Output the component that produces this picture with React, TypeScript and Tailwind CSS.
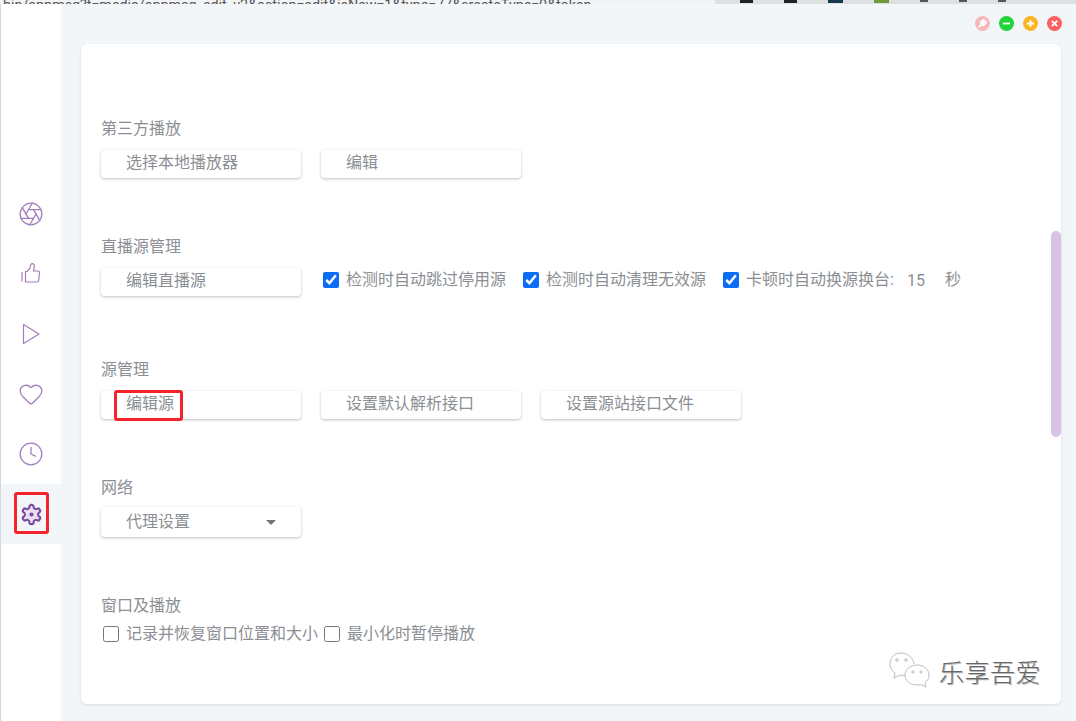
import { Aperture, Clock, Heart } from "lucide-react";

const font = "font-['Roboto','Noto_Sans_CJK_SC',sans-serif]";

function SideItem({ children, active }: { children: React.ReactNode; active?: boolean }) {
  return (
    <div className={`relative h-[60px] flex items-center justify-center ${active ? "bg-[#f2f6f9]" : ""}`}>
      {children}
    </div>
  );
}

function Section({ title, gap, top, children }: { title: string; gap: string; top: string; children: React.ReactNode }) {
  return (
    <section className={top}>
      <h3 className={`h-6 leading-[26px] text-base text-[#8b8f94] font-normal ${gap}`}>{title}</h3>
      {children}
    </section>
  );
}

function Btn({ label, marked }: { label: string; marked?: boolean }) {
  return (
    <button className="relative w-[200px] h-7 pl-[25px] pb-0.5 text-left text-base text-[#8b8f94] bg-white rounded-[4px] shadow-[0_1px_3px_rgba(0,0,0,0.25)]">
      {label}
      {marked && <span className="absolute left-[13px] -top-px w-[69px] h-[31px] rounded-[3px] border-[3px] border-[#f5232b]" />}
    </button>
  );
}

function Check({ label, checked }: { label: string; checked?: boolean }) {
  return (
    <label className="flex items-center gap-[7px] text-base leading-6 text-[#8b8f94]">
      <input type="checkbox" defaultChecked={checked} className="w-4 h-4 m-0 accent-[#0b6cf5]" />
      {label}
    </label>
  );
}

export default function App() {
  return (
    <div className={`${font} w-full h-[721px] overflow-hidden bg-[#f2f6f9] flex flex-col`}>
      {/* the browser window above is cut off, only its lowest pixels show */}
      <div className="h-1 flex items-end overflow-hidden bg-[#f3f3f3] text-[#55585c] text-[14.3px] leading-4 whitespace-nowrap">
        <span className="w-[715px] pl-[3px] -mb-[9px] shrink-0">bin/appmsg?t=media/appmsg_edit_v2&amp;action=edit&amp;isNew=1&amp;type=77&amp;createType=0&amp;token</span>
        <div className="flex-1 h-full bg-[#dedfe0] flex gap-[31px] pl-[25px]">
          <span className="w-[13px] h-[3px] bg-[#222]" />
          <span className="w-[13px] h-[3px] bg-[#222]" />
          <span className="w-[15px] h-[3px] bg-[#123a4a]" />
          <span className="w-[15px] h-[3px] bg-[#6f9a3a]" />
          <span className="w-2 h-0.5 bg-[#555]" />
          <span className="w-2 h-0.5 bg-[#555]" />
          <span className="w-2 h-0.5 bg-[#555]" />
        </div>
      </div>

      <div className="flex-1 flex min-h-0">
        <aside className="w-[61px] bg-white border-l border-l-[#d5d8da] pt-[180px] shrink-0 text-[#a27ebb]">
          <SideItem><Aperture size={26} strokeWidth={1.2} /></SideItem>
          <SideItem>
            <svg width="24" height="24" viewBox="0 0 24 24" fill="none" stroke="currentColor" strokeWidth="1.2" strokeLinejoin="round" className="-mt-0.5">
              <path d="M3 11v9.500M6.500 10.500h1.500c2-1.500 3.500-4 4-7 .2-1.300 3-1.200 3.300 1 .2 1.700-.4 3.800-.9 5.500h4.600c1 0 1.600.8 1.500 1.800l-.8 7.500c-.1.9-.7 1.700-1.700 1.700H6.500z" />
            </svg>
          </SideItem>
          <SideItem>
            <svg width="24" height="24" viewBox="0 0 24 24" fill="none" stroke="currentColor" strokeWidth="1.2" strokeLinejoin="round">
              <path d="M4.500 2.500v19L20 12z" />
            </svg>
          </SideItem>
          <SideItem><Heart size={26} strokeWidth={1.2} /></SideItem>
          <SideItem><Clock size={26} strokeWidth={1.2} /></SideItem>
          <SideItem active>
            <svg width="23" height="23" viewBox="0 0 24 24" fill="#e9e0f2" stroke="#7c4a9e" strokeWidth="2.2">
              <path d="M12.220 2h-.44a2 2 0 0 0-2 2v.18a2 2 0 0 1-1 1.730l-.43.25a2 2 0 0 1-2 0l-.15-.08a2 2 0 0 0-2.730.73l-.22.38a2 2 0 0 0 .73 2.730l.15.1a2 2 0 0 1 1 1.720v.51a2 2 0 0 1-1 1.740l-.15.09a2 2 0 0 0-.73 2.730l.22.38a2 2 0 0 0 2.730.73l.15-.08a2 2 0 0 1 2 0l.43.25a2 2 0 0 1 1 1.730V20a2 2 0 0 0 2 2h.44a2 2 0 0 0 2-2v-.18a2 2 0 0 1 1-1.730l.43-.25a2 2 0 0 1 2 0l.15.08a2 2 0 0 0 2.730-.73l.22-.39a2 2 0 0 0-.73-2.730l-.15-.08a2 2 0 0 1-1-1.740v-.5a2 2 0 0 1 1-1.740l.15-.09a2 2 0 0 0 .73-2.730l-.22-.38a2 2 0 0 0-2.730-.73l-.15.08a2 2 0 0 1-2 0l-.43-.25a2 2 0 0 1-1-1.730V4a2 2 0 0 0-2-2z" />
              <circle cx="12" cy="12" r="2.200" fill="#7c4a9e" stroke="none" />
            </svg>
            <span className="absolute left-[13px] top-[8px] w-[35px] h-[42px] rounded-[3px] border-[3px] border-[#f5232b]" />
          </SideItem>
        </aside>

        <main className="flex-1 min-w-0 flex flex-col pl-5 pr-[15px] pb-[17px]">
          <div className="h-10 flex items-start justify-end gap-[9px] pt-3 -mr-px">
            <span className="w-[15px] h-[15px] rounded-full bg-[#f5b8bb] flex items-center justify-center">
              <svg width="9" height="9" viewBox="0 0 10 10" fill="none" stroke="#fff" strokeWidth="2"><path d="M1 9l3-3M4 3l3 3M6 1l3 3-3 3-3-3z" /></svg>
            </span>
            <span className="w-[15px] h-[15px] rounded-full bg-[#22d33a] flex items-center justify-center">
              <svg width="9" height="9" viewBox="0 0 10 10" stroke="#fff" strokeWidth="2"><path d="M1 5h8" /></svg>
            </span>
            <span className="w-[15px] h-[15px] rounded-full bg-[#fbb524] flex items-center justify-center">
              <svg width="9" height="9" viewBox="0 0 10 10" stroke="#fff" strokeWidth="2"><path d="M1 5h8M5 1v8" /></svg>
            </span>
            <span className="w-[15px] h-[15px] rounded-full bg-[#fb5f5f] flex items-center justify-center">
              <svg width="9" height="9" viewBox="0 0 10 10" stroke="#fff" strokeWidth="2"><path d="M2 2l6 6M8 2l-6 6" /></svg>
            </span>
          </div>

          <div className="relative flex-1 bg-white rounded-md shadow-[0_1px_3px_rgba(0,0,0,0.1)] pl-5 pt-[72px]">
            <Section title="第三方播放" gap="mb-2.5" top="">
              <div className="flex gap-5">
                <Btn label="选择本地播放器" />
                <Btn label="编辑" />
              </div>
            </Section>

            <Section title="直播源管理" gap="mb-2.5" top="mt-14">
              <div className="flex items-center">
                <Btn label="编辑直播源" />
                <div className="flex items-center gap-[17px] ml-[22px] -mt-1">
                  <Check label="检测时自动跳过停用源" checked />
                  <Check label="检测时自动清理无效源" checked />
                  <div className="flex items-center">
                    <Check label="卡顿时自动换源换台:" checked />
                    <span className="ml-[13px] mt-0.5 text-base text-[#8b8f94]">15</span>
                    <span className="ml-5 text-base text-[#8b8f94]">秒</span>
                  </div>
                </div>
              </div>
            </Section>

            <Section title="源管理" gap="mb-2.5" top="mt-[61px]">
              <div className="flex gap-5">
                <Btn label="编辑源" marked />
                <Btn label="设置默认解析接口" />
                <Btn label="设置源站接口文件" />
              </div>
            </Section>

            <Section title="网络" gap="mb-2" top="mt-14">
              <div className="w-[200px] h-[30px] px-[25px] flex items-center justify-between text-base text-[#8b8f94] bg-white rounded-[4px] shadow-[0_1px_3px_rgba(0,0,0,0.25)]">
                代理设置
                <span className="w-0 h-0 border-x-[5px] border-x-transparent border-t-[5px] border-t-[#757575]" />
              </div>
            </Section>

            <Section title="窗口及播放" gap="mb-[5px]" top="mt-14">
              <div className="flex items-center gap-[6px] pl-[2px]">
                <Check label="记录并恢复窗口位置和大小" />
                <Check label="最小化时暂停播放" />
              </div>
            </Section>

            {/* scroll thumb */}
            <div className="absolute right-0 top-[187px] w-2.5 h-[206px] rounded-[5px] bg-[#d9c3e2]" />

            {/* watermark */}
            <div className="absolute right-5 bottom-[14px] flex items-center gap-[8px]">
              <svg width="42" height="36" viewBox="0 0 42 36" fill="none" stroke="#bdbdbd" strokeWidth="1">
                <path d="M25 12C24 5 18 1 12 1 5 1 1 6 1 12c0 4 2 7 5 9l-1 5 6-3c2 .5 3 .5 5 .5" />
                <path d="M28 13c7 0 12 4.500 12 10 0 3-1.500 6-4 7.500l1 4.500-5.500-2.500c-1 .3-2.500.5-3.500.5-7 0-12-4.500-12-10s5-10 12-10z" />
                <circle cx="8" cy="8" r="1.300" />
                <circle cx="17" cy="8" r="1.300" />
                <circle cx="24" cy="20" r="1.200" />
                <circle cx="32" cy="20" r="1.200" />
              </svg>
              <span className="mt-2 text-[25px] leading-8 font-light tracking-[0.5px] text-[#666] [text-shadow:1px_1px_0_#bbb]">乐享吾爱</span>
            </div>
          </div>
        </main>
      </div>
    </div>
  );
}
